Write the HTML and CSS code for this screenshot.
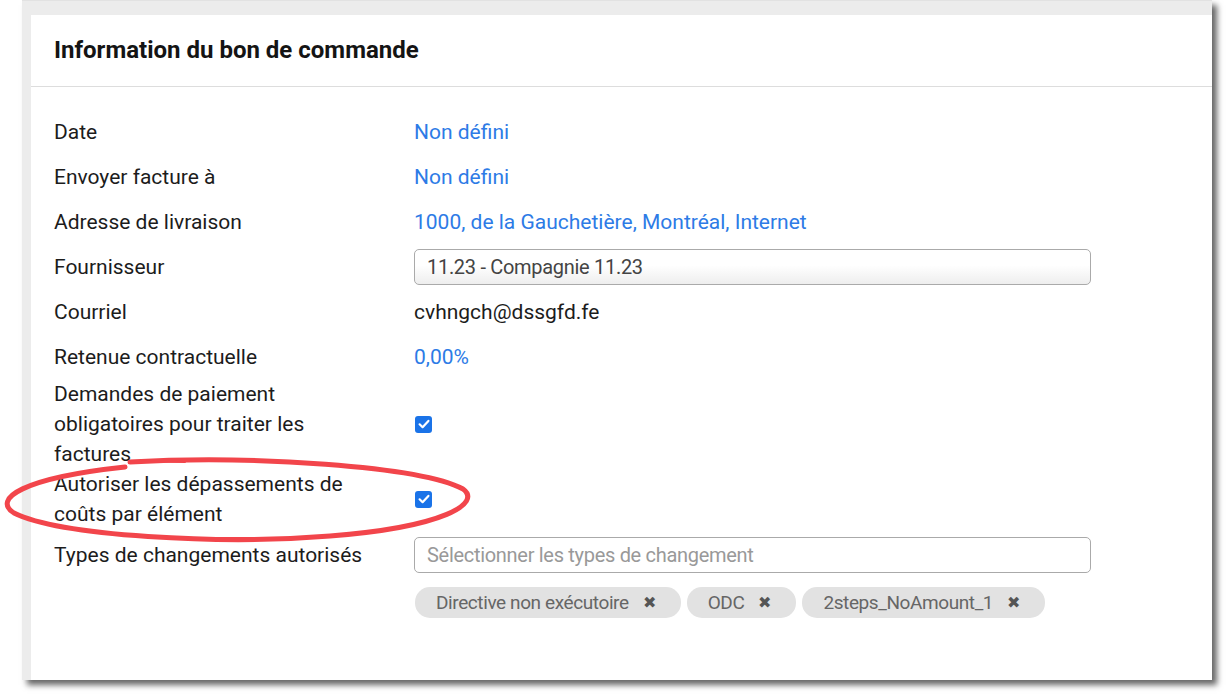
FILE: index.html
```html
<!DOCTYPE html>
<html lang="fr">
<head>
<meta charset="utf-8">
<title>Information du bon de commande</title>
<link rel="stylesheet" href="styles.css">
</head>
<body>
<div class="frame">
  <section class="card">
    <header class="card-header">
      <h2>Information du bon de commande</h2>
    </header>
    <div class="card-body">
      <div class="row">
        <div class="label">Date</div>
        <div class="value"><a class="link">Non défini</a></div>
      </div>
      <div class="row">
        <div class="label">Envoyer facture à</div>
        <div class="value"><a class="link">Non défini</a></div>
      </div>
      <div class="row">
        <div class="label">Adresse de livraison</div>
        <div class="value"><a class="link">1000, de la Gauchetière, Montréal, Internet</a></div>
      </div>
      <div class="row">
        <div class="label">Fournisseur</div>
        <div class="value"><div class="select">11.23 - Compagnie 11.23</div></div>
      </div>
      <div class="row">
        <div class="label">Courriel</div>
        <div class="value">cvhngch@dssgfd.fe</div>
      </div>
      <div class="row">
        <div class="label">Retenue contractuelle</div>
        <div class="value"><a class="link">0,00%</a></div>
      </div>
      <div class="row">
        <div class="label">Demandes de paiement obligatoires pour traiter les factures</div>
        <div class="value"><span class="cb"><svg viewBox="0 0 16 16" width="16" height="16"><path d="M3.6 8.3 L6.6 11.2 L12.4 4.9" fill="none" stroke="#fff" stroke-width="2.2" stroke-linecap="round" stroke-linejoin="round"/></svg></span></div>
      </div>
      <div class="row">
        <div class="label">Autoriser les dépassements de coûts par élément</div>
        <div class="value"><span class="cb"><svg viewBox="0 0 16 16" width="16" height="16"><path d="M3.6 8.3 L6.6 11.2 L12.4 4.9" fill="none" stroke="#fff" stroke-width="2.2" stroke-linecap="round" stroke-linejoin="round"/></svg></span></div>
      </div>
      <div class="row row-top">
        <div class="label">Types de changements autorisés</div>
        <div class="value value-stack">
          <div class="select placeholder">Sélectionner les types de changement</div>
          <div class="tags">
            <span class="tag">Directive non exécutoire <span class="x">✖</span></span>
            <span class="tag">ODC <span class="x">✖</span></span>
            <span class="tag">2steps_NoAmount_1 <span class="x">✖</span></span>
          </div>
        </div>
      </div>
    </div>
  </section>
</div>
<svg class="annot" width="1227" height="695" viewBox="0 0 1227 695">
  <path d="M130 461 L185 462" fill="none" stroke="#f2454b" stroke-width="2" stroke-linecap="round"/>
  <path d="M130 462 C 250 455, 420 466, 463 489 C 482 503, 445 527, 330 536 C 220 545, 60 536, 14 513 C -8 499, 22 478, 125 467" fill="none" stroke="#f2454b" stroke-width="5" stroke-linecap="round"/>
</svg>
</body>
</html>
```

FILE: styles.css
```css
html, body {
  margin: 0;
  padding: 0;
  background: #ffffff;
}

body {
  font-family: Roboto, "Liberation Sans", Arial, sans-serif;
  color: #1c1c1c;
  width: 1227px;
  height: 695px;
  position: relative;
  overflow: hidden;
}

.frame {
  margin-left: 22px;
  width: 1190px;
  height: 680px;
  box-sizing: border-box;
  padding: 14px 0 0 9px;
  background: #ececec;
  border-top: 1px solid #e2e2e2;
  box-shadow: 5px 5px 6px rgba(0, 0, 0, 0.6);
  display: flex;
}

.card {
  flex: 1;
  background: #ffffff;
  display: flex;
  flex-direction: column;
}

.card-header {
  height: 71px;
  border-bottom: 1px solid #dddddd;
  display: flex;
  align-items: center;
  padding-left: 23px;
}

.card-header h2 {
  margin: 0;
  font-size: 24px;
  font-weight: 700;
  color: #141414;
  position: relative;
  top: -1px;
}

.card-body {
  padding: 22px 0 0 23px;
  font-size: 21px;
}

.row {
  display: grid;
  grid-template-columns: 360px 677px;
  min-height: 45px;
  align-items: center;
}

.row-top {
  align-items: start;
  padding-top: 8px;
}

.label {
  line-height: 30px;
  padding-right: 42px;
  color: #1c1c1c;
}

.row-top .label {
  padding-top: 3px;
}

.value {
  line-height: 30px;
  display: flex;
  align-items: center;
}

.value-stack {
  flex-direction: column;
  align-items: stretch;
}

.link {
  color: #2d7be6;
  text-decoration: none;
}

.select {
  height: 36px;
  width: 100%;
  box-sizing: border-box;
  border: 1px solid #aaaaaa;
  border-radius: 5px;
  background: linear-gradient(#ffffff 45%, #eeeeee);
  padding-left: 12px;
  display: flex;
  align-items: center;
  font-size: 20px;
  color: #444444;
  letter-spacing: -0.3px;
}

.select.placeholder {
  background: #ffffff;
  color: #999999;
}

.cb {
  width: 17px;
  height: 17px;
  border-radius: 3px;
  background: #1a73e8;
  display: inline-flex;
  align-items: center;
  justify-content: center;
  margin-left: 1px;
}

.cb svg {
  display: block;
}

.tags {
  display: flex;
  gap: 6px;
  margin-top: 14px;
  padding-left: 1px;
}

.tag {
  height: 31px;
  border-radius: 15px;
  background: #e2e2e2;
  color: #666666;
  font-size: 19px;
  letter-spacing: -0.4px;
  display: inline-flex;
  align-items: center;
  padding: 0 25px 0 21px;
}

.tag .x {
  font-size: 16px;
  color: #555555;
  margin-left: 14px;
  letter-spacing: 0;
}

.annot {
  position: absolute;
  left: 0;
  top: 0;
  pointer-events: none;
}
```
